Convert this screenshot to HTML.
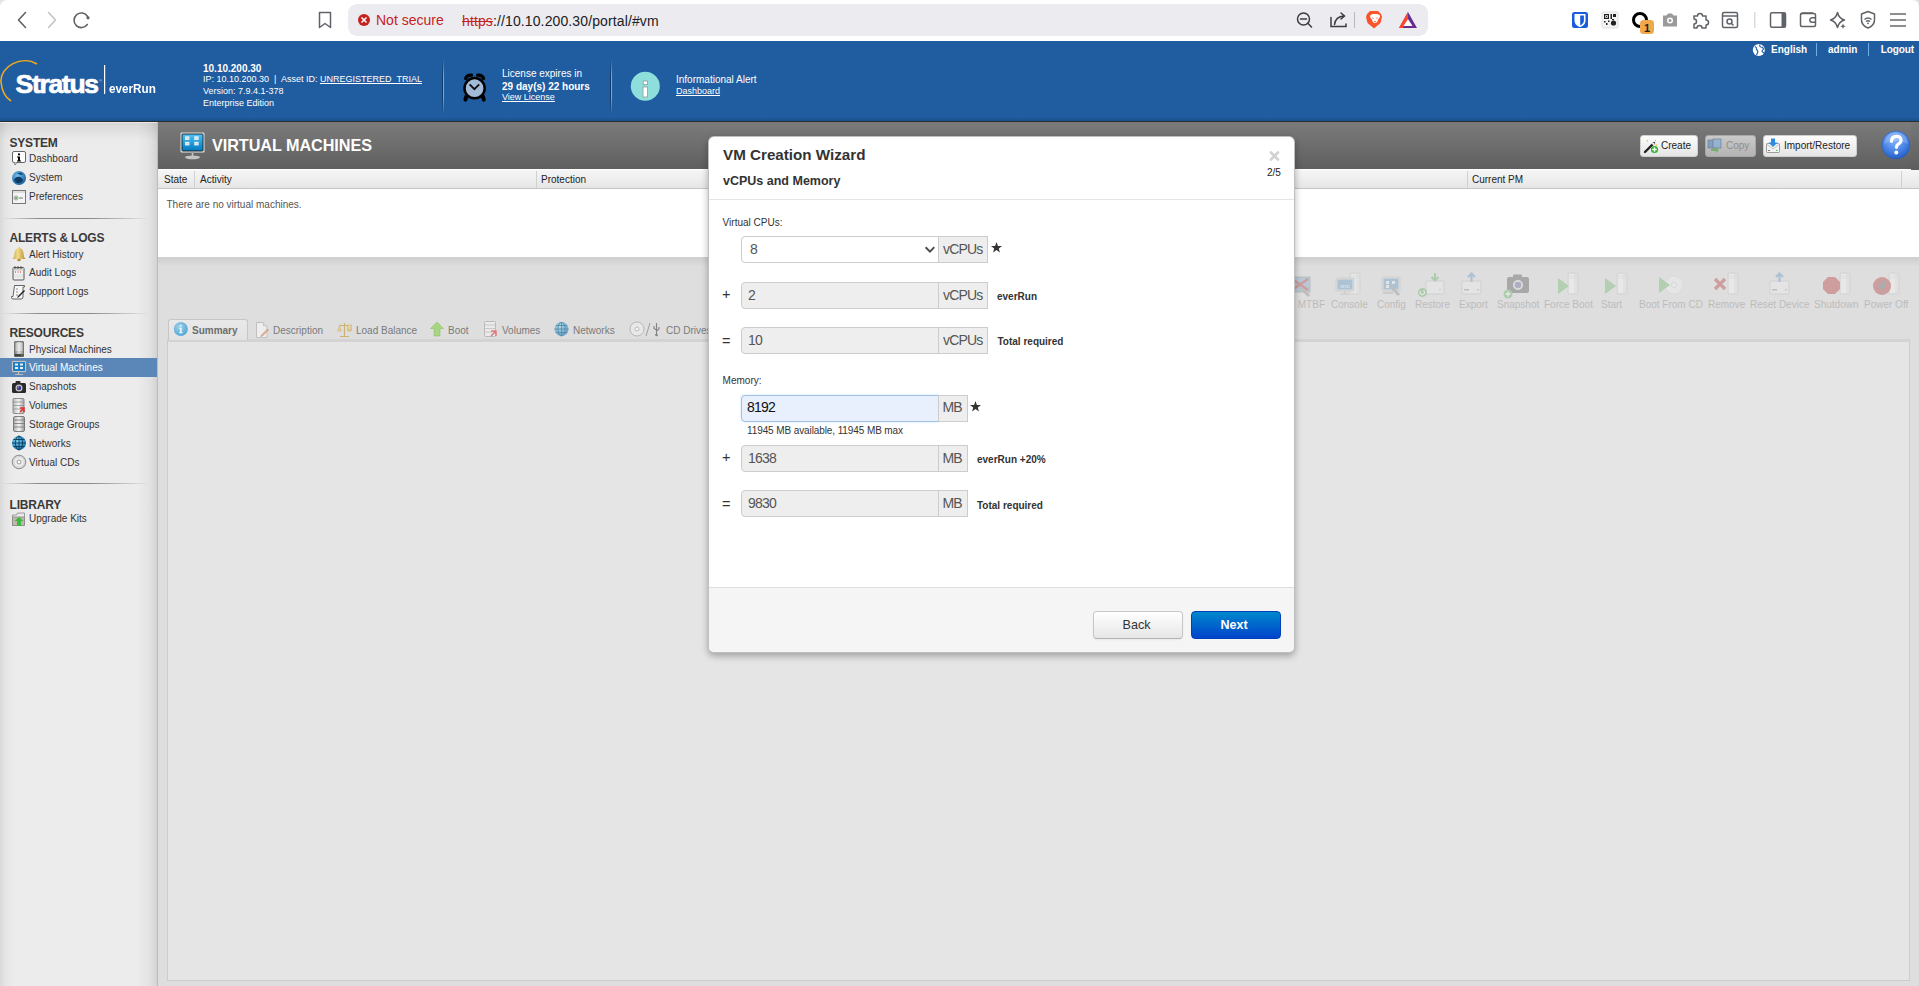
<!DOCTYPE html>
<html><head><meta charset="utf-8">
<style>
*{box-sizing:border-box;margin:0;padding:0}
html,body{width:1919px;height:986px;overflow:hidden;background:#dedede;font-family:"Liberation Sans",sans-serif;}
.a{position:absolute}
.t{position:absolute;white-space:nowrap;line-height:1}
#chrome{left:0;top:0;width:1919px;height:41px;background:#fff}
#hdr{left:0;top:41px;width:1919px;height:81px;background:#1f5ca0}
#side{left:0;top:122px;width:158px;height:864px;background:linear-gradient(90deg,#d9d9d9 0,#e6e6e6 6px,#ececec 14px,#ececec 138px,#e2e2e2 150px,#d3d3d3 157px,#bbb 157px,#bbb 158px)}
#main{left:158px;top:122px;width:1761px;height:864px;background:#dedede}
</style></head><body>
<!-- browser chrome -->
<div id="chrome" class="a">
<svg class="a" style="left:0;top:0" width="1919" height="41">
 <path d="M0 8 Q0 0 8 0 L0 0Z" fill="#e4e4e8"/>
 <path d="M1919 7 Q1919 0 1912 0 L1919 0Z" fill="#e4e4e8"/>
 <g fill="none" stroke="#5f6368" stroke-width="1.6" stroke-linecap="round" stroke-linejoin="round">
  <path d="M25.5 12.5 L18.5 20 L25.5 27.5"/>
  <path d="M48.5 12.5 L55.5 20 L48.5 27.5" stroke="#c4c4c8"/>
  <path d="M87.3 24.5 A7.3 7.3 0 1 1 87.6 16.5"/>
  <path d="M319.5 12.5 h11 v15 l-5.5 -4 l-5.5 4z" stroke-width="1.5"/>
 </g>
 <circle cx="88" cy="17.8" r="1.6" fill="#5f6368"/>
 <rect x="348" y="4" width="1080" height="32" rx="9" fill="#ececf0"/>
 <circle cx="364" cy="20" r="6" fill="#c5221f"/>
 <path d="M361.5 17.5 l5 5 M366.5 17.5 l-5 5" stroke="#fff" stroke-width="1.5"/>
 <g fill="none" stroke="#3c3c40" stroke-width="1.5" stroke-linecap="round">
  <circle cx="1303.5" cy="19" r="6"/>
  <path d="M1307.8 23.3 L1311.5 27 M1300.5 19 h6"/>
  <path d="M1331 17.5 v9 h15 v-2.5" />
  <path d="M1334.5 24.5 q1 -8 9.5 -8.5 M1341 13 l3.5 3 l-3.5 3"/>
 </g>
 <rect x="1354" y="12" width="1" height="16" fill="#b8b8bc"/>
 <path d="M1367 14 l3 -3 h8 l3 3 l1 3 l-1.5 6 l-6.5 5.5 l-6.5 -5.5 l-1.5 -6z" fill="#fb542b"/>
 <path d="M1370 15.5 l2.5 -1.5 h5 l2.5 1.5 l-0.5 2.5 l-1.5 1.5 l-0.5 2 l-1.5 1.5 h-2 l-1.5 -1.5 l-0.5 -2 l-1.5 -1.5z" fill="#fff"/><path d="M1372.2 17.8 l1.5 0.6 M1377.8 17.8 l-1.5 0.6" stroke="#fb542b" stroke-width="0.9"/><path d="M1373.5 21 h3 l-1.5 1.3z" fill="#fb542b"/>
 <path d="M1408 12 L1417 28 H1399Z" fill="#662d91"/>
 <path d="M1408 12 L1399 28 H1403 L1408 19Z" fill="#ff4724"/>
 <path d="M1408 19 L1412.5 26 H1403.5Z" fill="#fff"/>
 <rect x="1572" y="12" width="16" height="16" rx="2.5" fill="#175ddc"/>
 <path d="M1574.5 14 h11 v6.5 q0 4.5 -5.5 6.8 q-5.5 -2.3 -5.5 -6.8z" fill="#fff"/>
 <path d="M1580.2 15.6 h3.7 v4.9 q0 3.2 -3.7 5z" fill="#175ddc"/>
 <rect x="1602" y="12" width="16" height="16" rx="1" fill="#f4f4f4" stroke="#e0e0e0"/>
 <g fill="#222"><rect x="1604" y="14" width="5" height="5"/><rect x="1605.2" y="15.2" width="2.6" height="2.6" fill="#f4f4f4"/><rect x="1606" y="16" width="1" height="1"/><rect x="1610.5" y="14" width="1.5" height="5"/><rect x="1613" y="14" width="3" height="3"/><rect x="1604" y="21" width="1.5" height="1.5"/><rect x="1606" y="23" width="1.5" height="2"/><rect x="1608" y="20.5" width="1.5" height="1.5"/><circle cx="1613.5" cy="23" r="2.6"/><rect x="1612" y="19" width="2" height="1.2"/></g>
 <circle cx="1640" cy="20" r="6.5" fill="none" stroke="#000" stroke-width="3"/>
 <rect x="1640" y="20" width="14" height="14" rx="3.5" fill="#f0a84b"/>
 <text x="1647" y="31.5" font-size="11" font-weight="bold" text-anchor="middle" fill="#222" font-family="Liberation Sans">1</text>
 <path d="M1663 15.5 h3.5 l1.5 -2 h4 l1.5 2 h3.5 v11 h-14z" fill="#9a9a9a"/>
 <circle cx="1670" cy="20.5" r="3" fill="#fff"/><circle cx="1670" cy="20.5" r="1.5" fill="#9a9a9a"/>
 <g fill="none" stroke="#5f6368" stroke-width="1.5" stroke-linejoin="round">
  <path d="M1694 16 h3.5 a2.5 2.5 0 1 1 5 0 h3.5 v4 a2.5 2.5 0 1 1 0 5 v3 h-4 a2.5 2.5 0 1 0 -5 0 h-3 v-4 a2.5 2.5 0 1 0 0 -5z"/>
  <rect x="1722.5" y="12.5" width="15" height="15" rx="1.5"/>
  <path d="M1722.5 16 h15"/>
  <circle cx="1729.5" cy="21.5" r="2.5"/><path d="M1731.5 23.5 l2 2"/>
 </g>
 <rect x="1754" y="12" width="1.5" height="16" fill="#dcdce0"/>
 <g fill="none" stroke="#5f6368" stroke-width="1.5" stroke-linejoin="round">
  <rect x="1770.5" y="12.8" width="15" height="14.5" rx="1.5"/>
  <rect x="1800.5" y="13.5" width="15" height="13" rx="1.5"/>
  <path d="M1801 14.5 q0 -1.5 2 -1.5 h10"/>
  <path d="M1815.5 17.8 h-3.5 a2.2 2.2 0 0 0 0 4.4 h3.5"/>
  <path d="M1837.5 12.5 q1.5 6 7 7.5 q-5.5 1.5 -7 7.5 q-1.5 -6 -7 -7.5 q5.5 -1.5 7 -7.5z"/>
  <path d="M1868 11.5 l6.5 2.5 v6 q0 5.5 -6.5 8 q-6.5 -2.5 -6.5 -8 v-6z"/>
  <path d="M1864.5 19.5 q3.5 -3 7 0 M1866 21.5 q2 -1.5 4 0"/>
 </g>
 <rect x="1770.5" y="12.8" width="4" height="14.5" fill="#5f6368" transform="translate(11,0)"/>
 <path d="M1843 23.5 l0.8 2 l2 0.8 l-2 0.8 l-0.8 2 l-0.8 -2 l-2 -0.8 l2 -0.8z" fill="#5f6368"/>
 <circle cx="1868" cy="23.3" r="0.9" fill="#5f6368"/>
 <g stroke="#6a6a6e" stroke-width="1.6"><path d="M1890 14 h16 M1890 20 h16 M1890 26 h16"/></g>
</svg>
<div class="t" style="left:376px;top:13px;font-size:14px;color:#c5221f">Not secure</div>
<div class="t" style="left:462px;top:13.5px;font-size:14px;letter-spacing:0.12px;color:#202124"><span style="color:#c5221f;text-decoration:line-through">https</span>://10.10.200.30/portal/#vm</div>
</div>
<!-- header -->
<div id="hdr" class="a">
<div class="a" style="left:0;top:76px;width:1919px;height:4px;background:linear-gradient(rgba(20,40,70,0),rgba(20,40,70,0.25))"></div>
<div class="a" style="left:0;top:80px;width:1919px;height:1px;background:#2a2e33"></div>
<svg class="a" style="left:0;top:0" width="170" height="80">
 <path d="M37 23 C22 14 0 25 1 41 C2 51 6 57 11 60" fill="none" stroke="#f2a81d" stroke-width="1.6"/>
 <rect x="104" y="24" width="1.2" height="29" fill="#fff"/>
</svg>
<div class="t" style="left:15.5px;top:30px;font-size:26.5px;font-weight:bold;color:#fff;letter-spacing:-1.3px;-webkit-text-stroke:0.7px #fff">Stratus</div>
<div class="t" style="left:99px;top:38px;font-size:4px;color:#c8d6e8">&reg;</div>
<div class="t" style="left:109px;top:41.3px;font-size:13px;font-weight:bold;color:#fff;transform:scaleX(0.9);transform-origin:0 0;letter-spacing:0px">everRun</div>
<div class="t" style="left:203px;top:22.5px;font-size:10px;font-weight:bold;color:#fff">10.10.200.30</div>
<div class="t" style="left:203px;top:34.3px;font-size:9px;color:#fff">IP: 10.10.200.30 &nbsp;|&nbsp; Asset ID: <u>UNREGISTERED_TRIAL</u></div>
<div class="t" style="left:203px;top:46.3px;font-size:9px;color:#fff">Version: 7.9.4.1-378</div>
<div class="t" style="left:203px;top:58px;font-size:9px;color:#fff">Enterprise Edition</div>
<div class="a" style="left:442px;top:18px;width:1px;height:55px;background:linear-gradient(#1f5ca0,#123a66 30%,#123a66 70%,#1f5ca0)"></div>
<div class="a" style="left:443px;top:18px;width:1px;height:55px;background:linear-gradient(#1f5ca0,#7fa4cf 30%,#7fa4cf 70%,#1f5ca0)"></div>
<svg class="a" style="left:460px;top:30px" width="30" height="34">
 <path d="M5.6 7.6 Q7 3.6 11.6 4.2 M17.6 4.2 Q22.2 3.6 23.6 7.6" stroke="#000" stroke-width="3.2" fill="none" stroke-linecap="round"/>
 <path d="M6.2 25.8 L5.4 28.6 M23 25.8 L23.8 28.6" stroke="#000" stroke-width="4" stroke-linecap="round"/>
 <circle cx="14.6" cy="17.2" r="10.1" fill="#a3bbd9" stroke="#000" stroke-width="2.5"/>
 <path d="M9.6 13.3 L14.4 18.2 L19.2 13.3" stroke="#111" stroke-width="1.9" fill="none"/>
</svg>
<div class="t" style="left:502px;top:28.3px;font-size:10px;color:#fff">License expires in</div>
<div class="t" style="left:502px;top:40.5px;font-size:10px;font-weight:bold;color:#fff">29 day(s) 22 hours</div>
<div class="t" style="left:502px;top:52.1px;font-size:9px;color:#fff;text-decoration:underline">View License</div>
<div class="a" style="left:610px;top:18px;width:1px;height:55px;background:linear-gradient(#1f5ca0,#123a66 30%,#123a66 70%,#1f5ca0)"></div>
<div class="a" style="left:611px;top:18px;width:1px;height:55px;background:linear-gradient(#1f5ca0,#7fa4cf 30%,#7fa4cf 70%,#1f5ca0)"></div>
<svg class="a" style="left:628px;top:28px" width="36" height="36">
 <circle cx="17.3" cy="17.3" r="14.5" fill="#8edfdb"/>
 <rect x="15" y="18" width="4.6" height="10" fill="#fff" stroke="#999" stroke-width="0.8"/>
 <rect x="15.2" y="12" width="4.2" height="3.6" fill="#fff" stroke="#999" stroke-width="0.8"/>
</svg>
<div class="t" style="left:676px;top:33.8px;font-size:10px;color:#fff">Informational Alert</div>
<div class="t" style="left:676px;top:46.1px;font-size:9px;color:#fff;text-decoration:underline">Dashboard</div>
<svg class="a" style="left:1752px;top:2px" width="14" height="14">
 <circle cx="6.8" cy="7" r="6" fill="#fff"/>
 <path d="M3 3.5 q2 1 1.5 3 q2 1 1 3.5 l-1 2 M8 1.5 q-1 2 1 2.5 q2 0 2.5 2 l-1.5 2 q1 2 2 1.5" fill="none" stroke="#1f5ca0" stroke-width="1.1"/>
</svg>
<div class="t" style="left:1771px;top:4px;font-size:10px;font-weight:bold;color:#fff">English</div>
<div class="a" style="left:1816px;top:2px;width:1px;height:13px;background:#6ab0e6"></div>
<div class="t" style="left:1828px;top:4px;font-size:10px;font-weight:bold;color:#fff">admin</div>
<div class="a" style="left:1868px;top:2px;width:1px;height:13px;background:#6ab0e6"></div>
<div class="t" style="left:1880.8px;top:4px;font-size:10px;font-weight:bold;color:#fff;letter-spacing:-0.1px">Logout</div>
</div>
<div id="side" class="a">
<div class="a" style="left:0;top:0;width:157px;height:1px;background:#e9e9e9"></div>
<div class="a" style="left:0;top:1px;width:157px;height:18px;background:linear-gradient(rgba(0,0,0,0.09),rgba(0,0,0,0))"></div>
<div class="t" style="left:9.5px;top:15.3px;font-size:12px;font-weight:bold;color:#3a3a3a;letter-spacing:-0.2px">SYSTEM</div>
<svg class="a" style="left:11px;top:28.6px" width="16" height="16"><rect x="1.5" y="0.5" width="13" height="11" rx="1.5" fill="#fff" stroke="#666"/><path d="M3.5 11.5 l0.5 2.5 l2 -2.5" fill="#fff" stroke="#666" stroke-width="0.8"/><rect x="7" y="2.5" width="2" height="1.8" fill="#000"/><path d="M6 5.5 h3 v4 h1 v1 h-4 v-1 h1 v-3 h-1z" fill="#000"/></svg>
<div class="t" style="left:29px;top:32.1px;font-size:10px;color:#333">Dashboard</div>
<svg class="a" style="left:11px;top:47.5px" width="16" height="16"><defs><radialGradient id="gs" cx="0.4" cy="0.35" r="0.7"><stop offset="0" stop-color="#6fc0ef"/><stop offset="1" stop-color="#1a5f9a"/></radialGradient></defs><circle cx="8" cy="8" r="7" fill="url(#gs)"/><path d="M3 10 q2 -4 6 -3 q3 1 3 4 q-3 3 -6 2 q-2 -1 -3 -3z M6 3 q3 -1 6 1 l-2 1 q-2 -1 -4 -2z" fill="#0d3a66"/></svg>
<div class="t" style="left:29px;top:51.0px;font-size:10px;color:#333">System</div>
<svg class="a" style="left:11px;top:66.5px" width="16" height="16"><rect x="1.5" y="1.5" width="13" height="13" fill="#f4f4f4" stroke="#777"/><rect x="2" y="2" width="12" height="2" fill="#ddd"/><circle cx="5" cy="9" r="2" fill="#fff" stroke="#888" stroke-width="0.8"/><circle cx="5" cy="9" r="1" fill="#3a3"/><rect x="8" y="8.5" width="4" height="1" fill="#777"/></svg>
<div class="t" style="left:29px;top:70.0px;font-size:10px;color:#333">Preferences</div>
<div class="a" style="left:2px;top:96px;width:148px;height:1px;background:linear-gradient(90deg,rgba(120,120,120,0) 0,#8a8a8a 25%,#8a8a8a 60%,rgba(120,120,120,0) 100%)"></div>
<div class="t" style="left:9.5px;top:110.2px;font-size:12px;font-weight:bold;color:#3a3a3a;letter-spacing:-0.2px">ALERTS &amp; LOGS</div>
<svg class="a" style="left:11px;top:124.0px" width="16" height="16"><defs><linearGradient id="gb" x1="0" x2="1"><stop offset="0" stop-color="#c9a44a"/><stop offset="0.4" stop-color="#f2dc8c"/><stop offset="1" stop-color="#b88e2f"/></linearGradient></defs><path d="M8 1 q-1 0 -1 1 q-3 1 -3.5 5 q0 4 -2 6 h13 q-2 -2 -2 -6 q-0.5 -4 -3.5 -5 q0 -1 -1 -1z" fill="url(#gb)"/><ellipse cx="8" cy="14" rx="1.8" ry="1.2" fill="#b88e2f"/></svg>
<div class="t" style="left:29px;top:127.5px;font-size:10px;color:#333">Alert History</div>
<svg class="a" style="left:11px;top:142.8px" width="16" height="16"><rect x="2" y="2.5" width="11" height="12.5" rx="1" fill="#f2f2f2" stroke="#555"/><rect x="2.5" y="3" width="10" height="2.5" fill="#ccc"/><path d="M4 1 v3 M7 1 v3 M10 1 v3" stroke="#555" stroke-width="0.9"/><path d="M4 7 h1 M6.5 7 h1 M9 7 h1" stroke="#d22" stroke-width="1.2"/><path d="M3 10 h9 M3 12 h9" stroke="#ccc" stroke-width="0.6"/></svg>
<div class="t" style="left:29px;top:146.3px;font-size:10px;color:#333">Audit Logs</div>
<svg class="a" style="left:11px;top:161.6px" width="16" height="16"><path d="M3.5 1.5 h10 v1.5 h-1.5 v10 q0 2 -2 2 h-8 q-1.5 0 -1.5 -1.5 v-1 h1.5 z" fill="#f6f6f6" stroke="#555" stroke-width="0.9"/><path d="M5 5 h2 M5 8 h2 M5 11 h2" stroke="#777" stroke-width="0.8"/><path d="M13 6 l-6 6 l-1 2 l2 -1 l6 -6z" fill="#222"/></svg>
<div class="t" style="left:29px;top:165.1px;font-size:10px;color:#333">Support Logs</div>
<div class="a" style="left:2px;top:191px;width:148px;height:1px;background:linear-gradient(90deg,rgba(120,120,120,0) 0,#8a8a8a 25%,#8a8a8a 60%,rgba(120,120,120,0) 100%)"></div>
<div class="t" style="left:9.5px;top:205.2px;font-size:12px;font-weight:bold;color:#3a3a3a;letter-spacing:-0.2px">RESOURCES</div>
<div class="a" style="left:0;top:236px;width:157px;height:19px;background:#5a87b8"></div>
<svg class="a" style="left:11px;top:219.0px" width="16" height="16"><defs><linearGradient id="gpm" x1="0" x2="1"><stop offset="0" stop-color="#777"/><stop offset="0.5" stop-color="#ddd"/><stop offset="1" stop-color="#888"/></linearGradient></defs><rect x="3.5" y="0.5" width="9" height="15" rx="0.5" fill="url(#gpm)" stroke="#666" stroke-width="0.8"/><path d="M4.5 3 h7 M4.5 5 h7 M4.5 7 h7 M4.5 9 h7" stroke="#fff" stroke-width="0.8"/><rect x="3.5" y="13" width="9" height="2.5" fill="#444"/><rect x="10" y="13.5" width="1.5" height="1" fill="#4c4"/></svg>
<div class="t" style="left:29px;top:222.5px;font-size:10px;color:#333">Physical Machines</div>
<svg class="a" style="left:11px;top:237.8px" width="16" height="16"><rect x="1" y="1" width="14" height="11" rx="1" fill="#ddd" stroke="#999" stroke-width="0.6"/><rect x="2" y="2" width="12" height="9" fill="#1a7fc4"/><rect x="4" y="3.5" width="3" height="2" fill="#eee"/><rect x="9" y="3.5" width="3" height="2" fill="#eee"/><rect x="4" y="7" width="3" height="2" fill="#eee"/><rect x="9" y="7" width="3" height="2" fill="#eee"/><path d="M7.5 12 v2 M4 14.5 h8" stroke="#bbb" stroke-width="1.2"/></svg>
<div class="t" style="left:29px;top:241.3px;font-size:10px;color:#fff">Virtual Machines</div>
<svg class="a" style="left:11px;top:256.6px" width="16" height="16"><rect x="1" y="4" width="14" height="10" rx="1.5" fill="#2a2a2a"/><rect x="4.5" y="2" width="5" height="3" rx="1" fill="#2a2a2a"/><circle cx="8" cy="9" r="3.5" fill="#ccc"/><circle cx="8" cy="9" r="2.3" fill="#3b3b8a"/><circle cx="7.3" cy="8.3" r="0.7" fill="#aac"/></svg>
<div class="t" style="left:29px;top:260.1px;font-size:10px;color:#333">Snapshots</div>
<svg class="a" style="left:11px;top:275.5px" width="16" height="16"><defs><linearGradient id="gv" x1="0" x2="1"><stop offset="0" stop-color="#bbb"/><stop offset="0.5" stop-color="#f4f4f4"/><stop offset="1" stop-color="#aaa"/></linearGradient></defs><rect x="2" y="0.5" width="11" height="15" rx="1" fill="url(#gv)" stroke="#777" stroke-width="0.8"/><path d="M2.5 4 h10 M2.5 7.5 h10 M2.5 11 h10" stroke="#888" stroke-width="0.7"/><path d="M9 10 l4 0 l0 4 M9 14 l4 -4" stroke="#d33" stroke-width="1.6" fill="none"/><rect x="8" y="9" width="7" height="7" fill="none"/></svg>
<div class="t" style="left:29px;top:279.0px;font-size:10px;color:#333">Volumes</div>
<svg class="a" style="left:11px;top:294.3px" width="16" height="16"><defs><linearGradient id="gsg" x1="0" x2="1"><stop offset="0" stop-color="#aaa"/><stop offset="0.5" stop-color="#f6f6f6"/><stop offset="1" stop-color="#999"/></linearGradient></defs><rect x="2.5" y="0.5" width="11" height="15" rx="1.5" fill="url(#gsg)" stroke="#666" stroke-width="0.8"/><path d="M3 4 h10 M3 7.5 h10 M3 11 h10" stroke="#777" stroke-width="0.8"/></svg>
<div class="t" style="left:29px;top:297.8px;font-size:10px;color:#333">Storage Groups</div>
<svg class="a" style="left:11px;top:313.2px" width="16" height="16"><defs><radialGradient id="gn" cx="0.4" cy="0.35" r="0.7"><stop offset="0" stop-color="#7fd4f7"/><stop offset="1" stop-color="#0d6ea8"/></radialGradient></defs><circle cx="8" cy="8" r="7" fill="url(#gn)"/><path d="M1 8 h14 M8 1 v14 M2.5 4.5 h11 M2.5 11.5 h11" stroke="#0a3a5a" stroke-width="0.9"/><ellipse cx="8" cy="8" rx="3.5" ry="7" fill="none" stroke="#0a3a5a" stroke-width="0.9"/></svg>
<div class="t" style="left:29px;top:316.7px;font-size:10px;color:#333">Networks</div>
<svg class="a" style="left:11px;top:332.0px" width="16" height="16"><defs><radialGradient id="gcd"><stop offset="0" stop-color="#fff"/><stop offset="0.6" stop-color="#e8e8e8"/><stop offset="1" stop-color="#c8c8c8"/></radialGradient></defs><circle cx="8" cy="8" r="6.8" fill="url(#gcd)" stroke="#888" stroke-width="0.9"/><circle cx="8" cy="8" r="2" fill="#fff" stroke="#888" stroke-width="0.9"/></svg>
<div class="t" style="left:29px;top:335.5px;font-size:10px;color:#333">Virtual CDs</div>
<div class="a" style="left:2px;top:361px;width:148px;height:1px;background:linear-gradient(90deg,rgba(120,120,120,0) 0,#8a8a8a 25%,#8a8a8a 60%,rgba(120,120,120,0) 100%)"></div>
<div class="t" style="left:9.5px;top:376.5px;font-size:12px;font-weight:bold;color:#3a3a3a;letter-spacing:-0.2px">LIBRARY</div>
<svg class="a" style="left:11px;top:388.9px" width="16" height="16"><path d="M1.5 4 h4 l1 -2 h7 v12 h-12z" fill="#e8e8e8" stroke="#888" stroke-width="0.8"/><rect x="1.5" y="6" width="12" height="8.5" fill="#bfb8a8" stroke="#888" stroke-width="0.8"/><path d="M8 6 l-4.5 4 h2.5 v5 h4 v-5 h2.5z" fill="#3fb83f"/></svg>
<div class="t" style="left:29px;top:392.4px;font-size:10px;color:#333">Upgrade Kits</div>
</div>
<div id="main" class="a" style="left:0;top:0;width:1919px;height:986px;background:transparent">
<!-- grey area shadow -->
<div class="a" style="left:158px;top:257px;width:1761px;height:729px;background:#dedede"></div>
<div class="a" style="left:158px;top:257px;width:1761px;height:10px;background:linear-gradient(rgba(0,0,0,0.07),rgba(0,0,0,0))"></div>
<!-- title bar -->
<div class="a" style="left:158px;top:122px;width:1761px;height:47px;background:linear-gradient(#7b7b7b,#5f5f5f)"></div>
<div class="a" style="left:1911px;top:122px;width:8px;height:48px;background:linear-gradient(#777,#5d5d5d)"></div>
<svg class="a" style="left:179px;top:131px" width="28" height="30">
 <defs><linearGradient id="gvt" x1="0" y1="0" x2="0" y2="1"><stop offset="0" stop-color="#4fc3f7"/><stop offset="1" stop-color="#0277bd"/></linearGradient></defs>
 <rect x="1.5" y="1.5" width="24" height="20" rx="1.5" fill="#d8d8d8" stroke="#aaa" stroke-width="0.8"/>
 <rect x="3" y="3" width="21" height="17" rx="1" fill="url(#gvt)" stroke="#111" stroke-width="0.8"/>
 <rect x="6" y="5.3" width="4.4" height="3.6" fill="#e8f0f4"/><rect x="15.2" y="5.3" width="4.4" height="3.6" fill="#e8f0f4"/>
 <rect x="6" y="10.8" width="4.4" height="3.6" fill="#e8f0f4"/><rect x="15.2" y="10.8" width="4.4" height="3.6" fill="#e8f0f4"/>
 <path d="M6 7.1 h4.4 M15.2 7.1 h4.4 M6 12.6 h4.4 M15.2 12.6 h4.4" stroke="#9cc" stroke-width="0.4"/>
 <path d="M13.5 22 v3" stroke="#c8c8c8" stroke-width="1.5"/>
 <ellipse cx="13.5" cy="26.3" rx="7.5" ry="1.9" fill="#c4c4c4"/>
</svg>
<div class="t" style="left:212px;top:137px;font-size:16.2px;font-weight:bold;color:#fff;letter-spacing:-0.05px">VIRTUAL MACHINES</div>
<!-- toolbar buttons -->
<div class="a" style="left:1640px;top:135px;width:58px;height:22px;border-radius:3px;background:linear-gradient(#fdfdfd,#e4e4e4);border:1px solid #cfcfcf"></div>
<svg class="a" style="left:1643px;top:138px" width="16" height="16"><path d="M2 14 L11 5" stroke="#222" stroke-width="2.4" stroke-linecap="round"/><path d="M9.5 6.5 L11 5" stroke="#eee" stroke-width="2.4"/><path d="M4 2 l0.5 1.5 M13 2 l-1 1 M14 7 l-1.5 0" stroke="#e8b400" stroke-width="1"/><circle cx="11.5" cy="11.5" r="3.6" fill="#2db52d"/><path d="M11.5 9.3 v4.4 M9.3 11.5 h4.4" stroke="#fff" stroke-width="1.3"/></svg>
<div class="t" style="left:1661px;top:141px;font-size:10px;color:#222">Create</div>
<div class="a" style="left:1705px;top:135px;width:51px;height:22px;border-radius:3px;background:linear-gradient(#c9c9c9,#b4b4b4);border:1px solid #a8a8a8"></div>
<svg class="a" style="left:1707px;top:138px" width="16" height="16" opacity="0.6"><rect x="1" y="2" width="9" height="8" fill="#5a8ac8" stroke="#345" stroke-width="0.6"/><rect x="6" y="1" width="8" height="9" fill="#7aaae0" stroke="#345" stroke-width="0.6"/><path d="M4 11 h5 v-2 l3 3 l-3 3 v-2 h-5z" fill="#4a4"/></svg>
<div class="t" style="left:1726px;top:141px;font-size:10px;color:#8e8e8e">Copy</div>
<div class="a" style="left:1763px;top:135px;width:94px;height:22px;border-radius:3px;background:linear-gradient(#fdfdfd,#e4e4e4);border:1px solid #cfcfcf"></div>
<svg class="a" style="left:1765px;top:138px" width="16" height="16"><rect x="1.5" y="5.5" width="13" height="9" rx="1" fill="#f4f4f4" stroke="#888" stroke-width="0.8"/><path d="M1.5 6 l6.5 5 l6.5 -5" fill="none" stroke="#aaa" stroke-width="0.7"/><path d="M6 0.5 h4 v4 h2.5 l-4.5 4.5 l-4.5 -4.5 h2.5z" fill="#2a8be0"/><rect x="3" y="12" width="2" height="1" fill="#777"/><rect x="11" y="12" width="1.5" height="1" fill="#4c4"/></svg>
<div class="t" style="left:1784px;top:141px;font-size:10px;color:#222">Import/Restore</div>
<svg class="a" style="left:1881px;top:130px" width="30" height="30">
 <defs><radialGradient id="ghlp" cx="0.45" cy="0.3" r="0.75"><stop offset="0" stop-color="#8ab8ff"/><stop offset="0.55" stop-color="#4a86e8"/><stop offset="1" stop-color="#1e56c0"/></radialGradient></defs>
 <circle cx="15" cy="15" r="14" fill="url(#ghlp)" stroke="#2a5fb0" stroke-width="0.6"/>
 <path d="M3 14 q12 -6 24 0 q-1 -11 -12 -12 q-11 1 -12 12z" fill="#fff" opacity="0.18"/>
 <path d="M10.5 11.3 q0 -5 5 -5 q4.5 0 4.5 4 q0 2.5 -3 4 q-1.5 1 -1.5 3" fill="none" stroke="#fff" stroke-width="3.2" stroke-linecap="round"/>
 <circle cx="15.3" cy="22.5" r="2" fill="#fff"/>
</svg>
<!-- table header -->
<div class="a" style="left:158px;top:169px;width:1761px;height:20px;background:linear-gradient(#f6f6f6,#e6e6e6);border-top:1px solid #fff;border-bottom:1px solid #c4c4c4"></div>
<div class="a" style="left:1911px;top:169px;width:8px;height:1px;background:#5d5d5d"></div>
<div class="a" style="left:194px;top:171px;width:1px;height:17px;background:#d0d0d0"></div>
<div class="a" style="left:536px;top:171px;width:1px;height:17px;background:#d0d0d0"></div>
<div class="a" style="left:1467px;top:171px;width:1px;height:17px;background:#d0d0d0"></div>
<div class="a" style="left:1901px;top:171px;width:1px;height:17px;background:#d0d0d0"></div>
<div class="t" style="left:164px;top:175.4px;font-size:10px;color:#222">State</div>
<div class="t" style="left:200px;top:175.4px;font-size:10px;color:#222">Activity</div>
<div class="t" style="left:541px;top:175.4px;font-size:10px;color:#222">Protection</div>
<div class="t" style="left:1472px;top:175.4px;font-size:10px;color:#222">Current PM</div>
<!-- table body -->
<div class="a" style="left:158px;top:189px;width:1761px;height:68px;background:#fff"></div>
<div class="t" style="left:166.5px;top:200.3px;font-size:10px;color:#555">There are no virtual machines.</div>
<!-- panel -->
<div class="a" style="left:167px;top:339px;width:1743px;height:642px;background:#e5e5e5;border:1px solid #cdcdcd;border-top:3px solid #d3d3d3"></div>
<div class="a" style="left:168px;top:319px;width:80px;height:21px;background:linear-gradient(#e9e9e9,#e2e2e2);border:1px solid #c6c6c6;border-bottom:none;border-radius:3px 3px 0 0"></div>
<!-- tabs -->
<svg class="a" style="left:173px;top:322px" width="16" height="16"><defs><radialGradient id="gsum" cx="0.4" cy="0.35" r="0.7"><stop offset="0" stop-color="#9fd3ea"/><stop offset="1" stop-color="#4fa3d4"/></radialGradient></defs><circle cx="7.8" cy="7" r="7" fill="url(#gsum)"/><rect x="6.9" y="3" width="1.8" height="1.6" fill="#eaf6fb"/><path d="M6.3 5.8 h2.4 v4.2 h0.8 v1.2 h-3.2 v-1.2 h0.8 v-3 h-0.8z" fill="#eaf6fb"/></svg>
<div class="t" style="left:192px;top:325.6px;font-size:10px;font-weight:bold;color:#6d6d6d">Summary</div>
<svg class="a" style="left:255px;top:322px" width="16" height="16" opacity="0.75"><path d="M1.5 0.5 h7 l3.5 3.5 v11.5 h-10.5z" fill="#f4f4f4" stroke="#aaa" stroke-width="0.8"/><path d="M8.5 0.5 v3.5 h3.5" fill="#ddd" stroke="#aaa" stroke-width="0.6"/><path d="M13.5 8 l-6 6 l-1.5 0.5 l0.5 -1.5 l6 -6z" fill="#e8b86a" stroke="#c05050" stroke-width="0.5"/></svg>
<div class="t" style="left:273px;top:325.6px;font-size:10px;color:#7a7a7a">Description</div>
<svg class="a" style="left:337px;top:322px" width="16" height="16" opacity="0.7"><path d="M7.5 1 v13 M3 14.5 h9 M2 3.5 h11" stroke="#c8a040" stroke-width="1.2"/><path d="M0.8 9 l1.7 -5 l1.7 5z M10.8 9 l1.7 -5 l1.7 5z" fill="#e8cc80" stroke="#c8a040" stroke-width="0.6"/><rect x="10.5" y="3" width="4" height="5" fill="#e8cc80" stroke="#c8a040" stroke-width="0.6"/></svg>
<div class="t" style="left:356px;top:325.6px;font-size:10px;color:#7a7a7a">Load Balance</div>
<svg class="a" style="left:429px;top:321px" width="16" height="16" opacity="0.8"><path d="M8 1 l6.5 6.5 h-3.5 v7.5 h-6 v-7.5 h-3.5z" fill="#9ad46a" stroke="#7ab84a" stroke-width="0.6"/></svg>
<div class="t" style="left:448px;top:325.6px;font-size:10px;color:#7a7a7a">Boot</div>
<svg class="a" style="left:483px;top:321px" width="16" height="16" opacity="0.7"><rect x="1.5" y="0.5" width="11" height="15" rx="1" fill="#f0f0f0" stroke="#999" stroke-width="0.8"/><path d="M2 4 h10 M2 7.5 h10 M2 11 h10" stroke="#aaa" stroke-width="0.7"/><path d="M8 10 l5 0 l0 5 M8 15 l5 -5" stroke="#e05050" stroke-width="1.5" fill="none"/></svg>
<div class="t" style="left:502px;top:325.6px;font-size:10px;color:#7a7a7a">Volumes</div>
<svg class="a" style="left:554px;top:322px" width="16" height="16" opacity="0.75"><defs><radialGradient id="gn2" cx="0.4" cy="0.35" r="0.7"><stop offset="0" stop-color="#9fd8f0"/><stop offset="1" stop-color="#3a8ec0"/></radialGradient></defs><circle cx="7.5" cy="7" r="7" fill="url(#gn2)"/><path d="M0.5 7 h14 M7.5 0 v14 M2 3.5 h11 M2 10.5 h11" stroke="#2a6a90" stroke-width="0.8"/><ellipse cx="7.5" cy="7" rx="3.5" ry="7" fill="none" stroke="#2a6a90" stroke-width="0.8"/></svg>
<div class="t" style="left:573px;top:325.6px;font-size:10px;color:#7a7a7a">Networks</div>
<svg class="a" style="left:629px;top:321px" width="34" height="17" opacity="0.75"><circle cx="8" cy="8" r="7" fill="#ececec" stroke="#999" stroke-width="0.8"/><circle cx="8" cy="8" r="2" fill="#fff" stroke="#999" stroke-width="0.8"/><path d="M17 15 l4 -13" stroke="#888" stroke-width="1"/><path d="M27.5 2 v12 M25 5 v2.5 l2.5 1.5 M30 6 v2 l-2.5 2" stroke="#666" stroke-width="1.1" fill="none"/><circle cx="27.5" cy="14" r="1.3" fill="#666"/></svg>
<div class="t" style="left:666px;top:325.6px;font-size:10px;color:#7a7a7a">CD Drives</div>
<!-- toolbar -->
<div class="t" style="right:594px;top:300px;font-size:10px;color:#bcbcbc">Clear MTBF</div>
<div class="t" style="left:1331px;top:300px;font-size:10px;color:#bcbcbc">Console</div>
<div class="t" style="left:1377px;top:300px;font-size:10px;color:#bcbcbc">Config</div>
<div class="t" style="left:1415px;top:300px;font-size:10px;color:#bcbcbc">Restore</div>
<div class="t" style="left:1459px;top:300px;font-size:10px;color:#bcbcbc">Export</div>
<div class="t" style="left:1497px;top:300px;font-size:10px;color:#bcbcbc">Snapshot</div>
<div class="t" style="left:1544px;top:300px;font-size:10px;color:#bcbcbc">Force Boot</div>
<div class="t" style="left:1601px;top:300px;font-size:10px;color:#bcbcbc">Start</div>
<div class="t" style="left:1639px;top:300px;font-size:10px;color:#bcbcbc">Boot From CD</div>
<div class="t" style="left:1708px;top:300px;font-size:10px;color:#bcbcbc">Remove</div>
<div class="t" style="left:1750px;top:300px;font-size:10px;color:#bcbcbc">Reset Device</div>
<div class="t" style="left:1814px;top:300px;font-size:10px;color:#bcbcbc">Shutdown</div>
<div class="t" style="left:1864px;top:300px;font-size:10px;color:#bcbcbc">Power Off</div>
<svg class="a" style="left:1280px;top:272px;filter:saturate(0.7)" width="639" height="28" opacity="0.36"><rect x="10" y="5" width="20" height="15" fill="#6aa8e0" stroke="#777" stroke-width="0.8"/><path d="M12 7 l16 11 M28 7 l-16 11" stroke="#e02020" stroke-width="2.5"/><path d="M20 15 l9 9" stroke="#888" stroke-width="3"/><rect x="70" y="1" width="10" height="21" rx="1" fill="#e8e8e8" stroke="#b8b8b8" stroke-width="0.8"/><rect x="71" y="2" width="5" height="19" fill="#fafafa"/><path d="M71 4 h8 M71 6 h8" stroke="#ccc" stroke-width="0.6"/><rect x="56" y="6" width="18" height="13" rx="1" fill="#ddd" stroke="#999" stroke-width="0.6"/><rect x="57.5" y="7.5" width="15" height="10" fill="#3a9ae0"/><text x="65" y="15.5" font-size="6" fill="#fff" text-anchor="middle" font-family="Liberation Sans">vnc</text><path d="M65 19 v2 M61 22 h8" stroke="#999" stroke-width="1.2"/><rect x="102" y="5" width="18" height="14" rx="1" fill="#ddd" stroke="#999" stroke-width="0.6"/><rect x="103.5" y="6.5" width="15" height="11" fill="#3a9ae0"/><path d="M106 9 h3 v3 h-3z M112 9 h3 v3 h-3z M106 13 h3 v3 h-3z" fill="#eee"/><path d="M111 15 l8 8" stroke="#888" stroke-width="3"/><path d="M103 21 h10" stroke="#999" stroke-width="1.5"/><rect x="146" y="9" width="18" height="13" rx="1" fill="#f0f0f0" stroke="#aaa" stroke-width="0.8"/><path d="M155 1 v7 M151.5 5 l3.5 3.5 l3.5 -3.5" stroke="#3cb83c" stroke-width="2" fill="none"/><circle cx="142.5" cy="20.5" r="4.5" fill="#3cb83c"/><path d="M140.5 19 a2.2 2.2 0 1 0 3 -0.5" stroke="#fff" stroke-width="1.1" fill="none"/><rect x="159" y="17" width="2" height="1" fill="#4c4"/><rect x="182" y="9" width="19" height="13" rx="1" fill="#f0f0f0" stroke="#aaa" stroke-width="0.8"/><path d="M191.5 10 v-8 M188 5 l3.5 -3.5 l3.5 3.5" stroke="#4a90e2" stroke-width="2.2" fill="none"/><rect x="184" y="17" width="5" height="1.5" fill="#888"/><rect x="197" y="17" width="2" height="1.5" fill="#4c4"/><rect x="227" y="5" width="22" height="16" rx="2" fill="#4a4a4a"/><rect x="233" y="2.5" width="9" height="4" rx="1" fill="#4a4a4a"/><circle cx="238" cy="13" r="5" fill="#ddd"/><circle cx="238" cy="13" r="3.3" fill="#5a5ab0"/><circle cx="228" cy="22" r="4.5" fill="#3cb83c"/><path d="M228 19.5 v5 M225.5 22 h5" stroke="#fff" stroke-width="1.3"/><rect x="288" y="1" width="10" height="21" rx="1" fill="#e8e8e8" stroke="#b8b8b8" stroke-width="0.8"/><rect x="289" y="2" width="5" height="19" fill="#fafafa"/><path d="M289 4 h8 M289 6 h8" stroke="#ccc" stroke-width="0.6"/><path d="M278 6 l11 8 l-11 8z" fill="#4cc04c"/><rect x="337" y="1" width="10" height="21" rx="1" fill="#e8e8e8" stroke="#b8b8b8" stroke-width="0.8"/><rect x="338" y="2" width="5" height="19" fill="#fafafa"/><path d="M338 4 h8 M338 6 h8" stroke="#ccc" stroke-width="0.6"/><path d="M325 6 l11 8 l-11 8z" fill="#4cc04c"/><circle cx="394" cy="13" r="9" fill="#f4f4f4" stroke="#ccc" stroke-width="0.8"/><circle cx="394" cy="13" r="2.5" fill="#fff" stroke="#bbb" stroke-width="0.8"/><path d="M379 5 l11 8 l-11 8z" fill="#4cc04c"/><rect x="448" y="1" width="10" height="21" rx="1" fill="#e8e8e8" stroke="#b8b8b8" stroke-width="0.8"/><rect x="449" y="2" width="5" height="19" fill="#fafafa"/><path d="M449 4 h8 M449 6 h8" stroke="#ccc" stroke-width="0.6"/><path d="M435 7 l10 10 M445 7 l-10 10" stroke="#e02020" stroke-width="3.2"/><rect x="490" y="9" width="19" height="13" rx="1" fill="#f0f0f0" stroke="#aaa" stroke-width="0.8"/><path d="M499.5 10 v-8 M496 5 l3.5 -3.5 l3.5 3.5" stroke="#4a90e2" stroke-width="2.2" fill="none"/><rect x="492" y="17" width="5" height="1.5" fill="#888"/><rect x="505" y="17" width="2" height="1.5" fill="#4c4"/><rect x="560" y="1" width="10" height="21" rx="1" fill="#e8e8e8" stroke="#b8b8b8" stroke-width="0.8"/><rect x="561" y="2" width="5" height="19" fill="#fafafa"/><path d="M561 4 h8 M561 6 h8" stroke="#ccc" stroke-width="0.6"/><path d="M548 5 h7 l5 5 v7 l-5 5 h-7 l-5 -5 v-7z" fill="#e02020"/><rect x="609" y="1" width="10" height="21" rx="1" fill="#e8e8e8" stroke="#b8b8b8" stroke-width="0.8"/><rect x="610" y="2" width="5" height="19" fill="#fafafa"/><path d="M610 4 h8 M610 6 h8" stroke="#ccc" stroke-width="0.6"/><circle cx="602" cy="14" r="9" fill="#e02020"/><path d="M602 10 v12 M599.5 8 v4 M604.5 8 v4 M599 12 h6 v3 l-3 2 l-3 -2z" stroke="#555" stroke-width="1.2" fill="#555"/></svg>
</div>
<!-- modal -->
<div class="a" style="left:708px;top:136px;width:587px;height:517px;border-radius:6px;background:#fff;border:1px solid rgba(0,0,0,0.25);box-shadow:0 3px 7px rgba(0,0,0,0.3);overflow:hidden">
 <div class="a" style="left:0;top:450px;width:586px;height:66px;background:#f5f5f5;border-top:1px solid #ddd"></div>
 <div class="a" style="left:0;top:62px;width:586px;height:1px;background:#e5e5e5"></div>
</div>
<div class="t" style="left:723px;top:147px;font-size:15.2px;font-weight:bold;color:#333">VM Creation Wizard</div>
<div class="t" style="left:723px;top:174.8px;font-size:12.5px;font-weight:bold;color:#333">vCPUs and Memory</div>
<svg class="a" style="left:1268px;top:150px" width="14" height="13"><path d="M3 2.5 l7 7 M10 2.5 l-7 7" stroke="#d2d2d2" stroke-width="2.6" stroke-linecap="round"/></svg>
<div class="t" style="left:1267px;top:168.2px;font-size:10px;color:#222">2/5</div>
<div class="t" style="left:722.6px;top:217.5px;font-size:10px;color:#333">Virtual CPUs:</div>
<!-- select -->
<div class="a" style="left:741px;top:236px;width:198px;height:27px;background:#fff;border:1px solid #ccc;border-radius:4px 0 0 4px"></div>
<div class="t" style="left:750px;top:242px;font-size:14px;color:#555">8</div>
<svg class="a" style="left:923px;top:244px" width="14" height="11"><path d="M2.6 3.3 L7 7.6 L11.3 3.2" stroke="#4a4a4a" stroke-width="1.9" fill="none"/></svg>
<div class="a" style="left:938px;top:236px;width:50px;height:27px;background:#eee;border:1px solid #ccc"></div>
<div class="t" style="left:943px;top:242.2px;font-size:14px;letter-spacing:-0.8px;color:#555">vCPUs</div>
<svg class="a" style="left:990.5px;top:242px" width="12" height="12"><path d="M5.5 0 L6.9 3.9 L11 4 L7.8 6.5 L8.9 10.5 L5.5 8.1 L2.1 10.5 L3.2 6.5 L0 4 L4.1 3.9Z" fill="#333"/></svg>
<!-- + row -->
<div class="t" style="left:722px;top:286.5px;font-size:14.5px;color:#333">+</div>
<div class="a" style="left:741px;top:282px;width:198px;height:27px;background:#eee;border:1px solid #ccc;border-radius:4px 0 0 4px"></div>
<div class="t" style="left:748px;top:288px;font-size:14px;color:#555">2</div>
<div class="a" style="left:938px;top:282px;width:50px;height:27px;background:#eee;border:1px solid #ccc"></div>
<div class="t" style="left:943px;top:288.2px;font-size:14px;letter-spacing:-0.8px;color:#555">vCPUs</div>
<div class="t" style="left:997px;top:291.5px;font-size:10px;font-weight:bold;color:#333">everRun</div>
<!-- = row -->
<div class="t" style="left:722px;top:333.5px;font-size:14.5px;color:#333">=</div>
<div class="a" style="left:741px;top:327px;width:198px;height:27px;background:#eee;border:1px solid #ccc;border-radius:4px 0 0 4px"></div>
<div class="t" style="left:748px;top:333px;font-size:14px;letter-spacing:-0.8px;color:#555">10</div>
<div class="a" style="left:938px;top:327px;width:50px;height:27px;background:#eee;border:1px solid #ccc"></div>
<div class="t" style="left:943px;top:333.2px;font-size:14px;letter-spacing:-0.8px;color:#555">vCPUs</div>
<div class="t" style="left:997.5px;top:337px;font-size:10px;font-weight:bold;color:#333">Total required</div>
<!-- memory -->
<div class="t" style="left:722.6px;top:375.5px;font-size:10px;color:#333">Memory:</div>
<div class="a" style="left:741px;top:395px;width:198px;height:27px;background:#e8f0fe;border:1px solid #9fc2e4;border-radius:4px 0 0 4px;box-shadow:0 0 3px rgba(82,168,236,0.25)"></div>
<div class="t" style="left:747px;top:400px;font-size:14px;letter-spacing:-0.8px;color:#111">8192</div>
<div class="a" style="left:938px;top:395px;width:30px;height:27px;background:#eee;border:1px solid #ccc"></div>
<div class="t" style="left:942.5px;top:400.2px;font-size:14px;letter-spacing:-0.8px;color:#555">MB</div>
<svg class="a" style="left:969.5px;top:400.5px" width="12" height="12"><path d="M5.5 0 L6.9 3.9 L11 4 L7.8 6.5 L8.9 10.5 L5.5 8.1 L2.1 10.5 L3.2 6.5 L0 4 L4.1 3.9Z" fill="#333"/></svg>
<div class="t" style="left:747px;top:425.6px;font-size:10px;letter-spacing:-0.1px;color:#333">11945 MB available, 11945 MB max</div>
<div class="t" style="left:722px;top:450px;font-size:14.5px;color:#333">+</div>
<div class="a" style="left:741px;top:445px;width:198px;height:27px;background:#eee;border:1px solid #ccc;border-radius:4px 0 0 4px"></div>
<div class="t" style="left:748px;top:451px;font-size:14px;letter-spacing:-0.8px;color:#555">1638</div>
<div class="a" style="left:938px;top:445px;width:30px;height:27px;background:#eee;border:1px solid #ccc"></div>
<div class="t" style="left:942.5px;top:451.2px;font-size:14px;letter-spacing:-0.8px;color:#555">MB</div>
<div class="t" style="left:977px;top:455px;font-size:10px;font-weight:bold;color:#333">everRun +20%</div>
<div class="t" style="left:722px;top:496.5px;font-size:14.5px;color:#333">=</div>
<div class="a" style="left:741px;top:490px;width:198px;height:27px;background:#eee;border:1px solid #ccc;border-radius:4px 0 0 4px"></div>
<div class="t" style="left:748px;top:496px;font-size:14px;letter-spacing:-0.8px;color:#555">9830</div>
<div class="a" style="left:938px;top:490px;width:30px;height:27px;background:#eee;border:1px solid #ccc"></div>
<div class="t" style="left:942.5px;top:496.2px;font-size:14px;letter-spacing:-0.8px;color:#555">MB</div>
<div class="t" style="left:977px;top:501px;font-size:10px;font-weight:bold;color:#333">Total required</div>
<!-- footer buttons -->
<div class="a" style="left:1093px;top:611px;width:90px;height:28px;border-radius:4px;background:linear-gradient(#fff,#e6e6e6);border:1px solid #c8c8c8;border-bottom-color:#b3b3b3;box-shadow:0 1px 2px rgba(0,0,0,0.05)"></div>
<div class="t" style="left:1091.5px;top:618.5px;width:90px;text-align:center;font-size:12.6px;color:#333">Back</div>
<div class="a" style="left:1191px;top:611px;width:90px;height:28px;border-radius:4px;background:linear-gradient(#0088cc,#0044cc);border:1px solid #0040b8"></div>
<div class="t" style="left:1189px;top:618.5px;width:90px;text-align:center;font-size:12.5px;font-weight:bold;color:#fff">Next</div>
</body></html>
